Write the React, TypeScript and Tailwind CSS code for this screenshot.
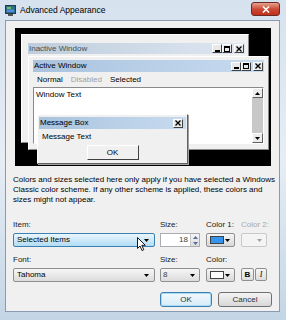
import React from "react";

const F = { fontFamily: '"Liberation Sans", Arial, sans-serif' };

function Cap({ kind }: { kind: "min" | "max" | "close" }) {
  return (
    <div className="flex h-[9px] w-[10px] items-center justify-center border border-t-white border-l-white border-r-[#404040] border-b-[#404040] bg-[#e8e8e8]">
      {kind === "min" && <div className="mt-[4px] h-[2px] w-[5px] bg-black" />}
      {kind === "max" && <div className="h-[6px] w-[6px] border border-t-2 border-black" />}
      {kind === "close" && (
        <svg width="6" height="6" viewBox="0 0 6 6">
          <path d="M0.5 0.5L5.5 5.5M5.5 0.5L0.5 5.5" stroke="black" strokeWidth="1.3" />
        </svg>
      )}
    </div>
  );
}

function Caps() {
  return (
    <div className="flex items-center">
      <Cap kind="min" />
      <Cap kind="max" />
      <div className="ml-[2px]">
        <Cap kind="close" />
      </div>
    </div>
  );
}

function Preview() {
  return (
    <div className="relative ml-[9px] mt-[7px] h-[138px] w-[256px] overflow-hidden bg-black text-[8px]" style={F}>
      {/* inactive window */}
      <div className="absolute left-[6px] top-[6px] h-[109px] w-[228px] border border-t-white border-l-white border-r-[#8a8a8a] border-b-[#8a8a8a] bg-[#f0f0f0]">
        <div className="ml-[6px] mr-[3px] mt-[8px] flex h-[11px] items-center justify-between bg-gradient-to-r from-[#bfcddb] to-[#dde7f2] pl-[1px] pr-[1px]">
          <span className="text-[#434e54]">Inactive Window</span>
          <Caps />
        </div>
      </div>
      {/* active window */}
      <div className="absolute left-[13px] top-[28px] flex h-[94px] w-[241px] flex-col border border-t-white border-l-white border-r-[#8a8a8a] border-b-[#8a8a8a] bg-[#f0f0f0] px-[4px] pt-[3px]">
        <div className="flex h-[12px] items-center justify-between bg-gradient-to-r from-[#a9c3de] to-[#c7dbef] pl-[1px] pr-[1px]">
          <span className="text-black">Active Window</span>
          <Caps />
        </div>
        <div className="flex h-[15px] items-center gap-[8px] pl-[4px]">
          <span className="text-black">Normal</span>
          <span className="text-[#a0a0a0]">Disabled</span>
          <span className="text-black">Selected</span>
        </div>
        <div className="flex flex-1 border border-t-[#8a8a8a] border-l-[#8a8a8a] border-r-white border-b-white bg-white">
          <div className="flex-1 pl-[2px] pt-[1px] text-black">Window Text</div>
          <div className="flex w-[11px] flex-col justify-between bg-[#c8c8c8]">
            <div className="flex h-[10px] items-center justify-center border border-t-white border-l-white border-r-[#606060] border-b-[#606060] bg-[#ececec]">
              <svg width="5" height="3" viewBox="0 0 5 3"><path d="M2.5 0L5 3H0z" fill="black" /></svg>
            </div>
            <div className="flex h-[10px] items-center justify-center border border-t-white border-l-white border-r-[#606060] border-b-[#606060] bg-[#ececec]">
              <svg width="5" height="3" viewBox="0 0 5 3"><path d="M0 0H5L2.5 3z" fill="black" /></svg>
            </div>
          </div>
        </div>
        <div className="h-[5px]" />
      </div>
      {/* message box */}
      <div className="absolute left-[22px] top-[86px] flex h-[50px] w-[151px] flex-col border border-t-white border-l-white border-r-[#606060] border-b-[#606060] bg-[#f0f0f0] px-[1px] pt-[2px] shadow-[1px_1px_0_#a0a0a0]">
        <div className="flex h-[12px] items-center justify-between bg-gradient-to-r from-[#a9c3de] to-[#c7dbef] pl-[1px] pr-[3px]">
          <span className="text-black">Message Box</span>
          <Cap kind="close" />
        </div>
        <div className="pl-[3px] pt-[2px] text-black">Message Text</div>
        <div className="mt-[2px] flex justify-center">
          <div className="flex h-[15px] w-[52px] items-center justify-center border border-t-white border-l-white border-r-[#404040] border-b-[#404040] text-black">
            OK
          </div>
        </div>
      </div>
    </div>
  );
}

function Arrow({ color = "#000" }: { color?: string }) {
  return (
    <svg width="5" height="3" viewBox="0 0 5 3">
      <path d="M0 0H5L2.5 3z" fill={color} />
    </svg>
  );
}

function Combo({ text, hover }: { text: string; hover?: boolean }) {
  return (
    <div
      className={
        "relative flex h-[14px] w-[142px] items-center justify-between rounded-[2px] border pl-[3px] pr-[5px] " +
        (hover
          ? "border-[#3c7fb1] bg-gradient-to-b from-[#eaf6fd] to-[#b2dcf4]"
          : "border-[#8e8f8f] bg-gradient-to-b from-[#f6f6f6] to-[#dcdcdc]")
      }
    >
      <span>{text}</span>
      <Arrow />
      {hover && (
        <svg className="absolute left-[123px] top-[3px]" width="10" height="15" viewBox="0 0 10 15">
          <path d="M0.5 0.5V11.5L3 9L5 13.5L6.8 12.7L4.8 8.3H8.3Z" fill="white" stroke="black" strokeWidth="0.9" />
        </svg>
      )}
    </div>
  );
}

function ColorBtn({ swatch, disabled }: { swatch?: string; disabled?: boolean }) {
  return (
    <div
      className={
        "flex h-[14px] items-center justify-between rounded-[2px] border pl-[3px] pr-[4px] " +
        (disabled ? "border-[#c9c9c9] bg-[#f4f4f4]" : "border-[#8e8f8f] bg-gradient-to-b from-[#f6f6f6] to-[#d8d8d8]")
      }
    >
      {swatch ? <div className="h-[8px] w-[14px] border border-[#404040]" style={{ background: swatch }} /> : <div />}
      <Arrow color={disabled ? "#a0a0a0" : "#000"} />
    </div>
  );
}

export default function App() {
  return (
    <div
      className="flex h-[320px] w-[286px] flex-col overflow-hidden bg-gradient-to-b from-[#d6e2ee] via-[#e6edf5] to-[#c3d6e6]"
      style={F}
    >
      {/* title bar */}
      <div className="relative flex h-[20px] items-center pl-[5px]">
        <svg width="11" height="11" viewBox="0 0 11 11">
          <rect x="0.5" y="0.5" width="10" height="8" fill="#2e6d8e" stroke="#1f3a4a" />
          <rect x="2" y="2" width="4" height="2" fill="#6fc35a" />
          <rect x="2" y="4.5" width="7" height="2.5" fill="#4c8fd6" />
          <rect x="3" y="9" width="5" height="2" fill="#555" />
        </svg>
        <span className="ml-[4px] text-[8.5px] text-black">Advanced Appearance</span>
        <div className="absolute left-[251px] top-[2px] flex h-[14px] w-[29px] items-center justify-center rounded-[3px] border border-[#6b2a22] bg-gradient-to-b from-[#e7a08f] via-[#cc4a36] to-[#c0301c]">
          <svg width="8" height="7" viewBox="0 0 8 7">
            <path d="M1 0.5L7 6.5M7 0.5L1 6.5" stroke="white" strokeWidth="1.6" />
          </svg>
        </div>
      </div>
      {/* body */}
      <div className="flex h-[292px]">
        <div className="w-[5px]" />
        <div className="flex w-[275px] flex-col border border-[#8a9bb0] bg-[#f0f0f0] text-[8px] text-black">
          <Preview />
          <p className="mt-[9px] pl-[7px] pr-[4px] text-[8px] leading-[10px] text-black">
            Colors and sizes selected here only apply if you have selected a Windows Classic color scheme. If any other scheme is applied, these colors and sizes might not appear.
          </p>
          {/* row 1 */}
          <div className="mt-[15px] flex pl-[7px]">
            <div className="flex w-[142px] flex-col gap-[3px]">
              <span className="h-[10px] leading-[10px] text-[#202020]">Item:</span>
              <Combo text="Selected Items" hover />
            </div>
            <div className="ml-[5px] flex w-[40px] flex-col gap-[3px]">
              <span className="h-[10px] leading-[10px] text-[#202020]">Size:</span>
              <div className="flex h-[14px] border border-[#abadb3] bg-white">
                <div className="flex-1 pr-[2px] text-right text-[#404040]">18</div>
                <div className="flex w-[9px] flex-col border-l border-[#c8c8c8] bg-gradient-to-b from-[#f4f4f4] to-[#dcdcdc]">
                  <div className="flex flex-1 items-center justify-center">
                    <svg width="5" height="3" viewBox="0 0 5 3"><path d="M2.5 0L5 3H0z" fill="#5070a0" /></svg>
                  </div>
                  <div className="flex flex-1 items-center justify-center">
                    <svg width="5" height="3" viewBox="0 0 5 3"><path d="M0 0H5L2.5 3z" fill="#5070a0" /></svg>
                  </div>
                </div>
              </div>
            </div>
            <div className="ml-[6px] flex w-[29px] flex-col gap-[3px]">
              <span className="h-[10px] whitespace-nowrap leading-[10px] text-[#202020]">Color 1:</span>
              <ColorBtn swatch="#3594f0" />
            </div>
            <div className="ml-[6px] flex w-[26px] flex-col gap-[3px]">
              <span className="h-[10px] whitespace-nowrap leading-[10px] text-[#a8a8a8]">Color 2:</span>
              <ColorBtn disabled />
            </div>
          </div>
          {/* row 2 */}
          <div className="mt-[8px] flex pl-[7px]">
            <div className="flex w-[142px] flex-col gap-[3px]">
              <span className="h-[10px] leading-[10px] text-[#202020]">Font:</span>
              <Combo text="Tahoma" />
            </div>
            <div className="ml-[5px] flex w-[40px] flex-col gap-[3px]">
              <span className="h-[10px] leading-[10px] text-[#202020]">Size:</span>
              <div className="flex h-[14px] items-center justify-between rounded-[2px] border border-[#8e8f8f] bg-gradient-to-b from-[#f6f6f6] to-[#dcdcdc] pl-[2px] pr-[4px]">
                <span className="text-[#404040]">8</span>
                <Arrow />
              </div>
            </div>
            <div className="ml-[6px] flex w-[29px] flex-col gap-[3px]">
              <span className="h-[10px] leading-[10px] text-[#202020]">Color:</span>
              <ColorBtn swatch="#ffffff" />
            </div>
            <div className="ml-[6px] flex w-[27px] flex-col gap-[3px]">
              <span className="h-[10px]" />
              <div className="flex h-[14px] gap-[1px]">
                <div className="flex h-[13px] w-[13px] items-center justify-center rounded-[2px] border border-[#8e8f8f] bg-gradient-to-b from-[#f6f6f6] to-[#dcdcdc] text-[8px] font-bold">
                  B
                </div>
                <div className="flex h-[13px] w-[12px] items-center justify-center rounded-[2px] border border-[#8e8f8f] bg-gradient-to-b from-[#f6f6f6] to-[#dcdcdc] text-[8px] italic" style={{ fontFamily: '"Liberation Serif", serif' }}>
                  I
                </div>
              </div>
            </div>
          </div>
          {/* buttons */}
          <div className="mt-[10px] flex pl-[154px]">
            <div className="flex h-[15px] w-[52px] items-center justify-center rounded-[3px] border border-[#3c7fb1] bg-gradient-to-b from-[#f2f9fd] to-[#d6ecf8] text-[#303030] shadow-[0_0_0_1px_#a8dcf4_inset]">
              OK
            </div>
            <div className="ml-[6px] flex h-[15px] w-[54px] items-center justify-center rounded-[3px] border border-[#707070] bg-gradient-to-b from-[#f4f4f4] to-[#d8d8d8] text-[#303030]">
              Cancel
            </div>
          </div>
        </div>
        <div className="w-[6px]" />
      </div>
      <div className="h-[8px]" />
    </div>
  );
}
